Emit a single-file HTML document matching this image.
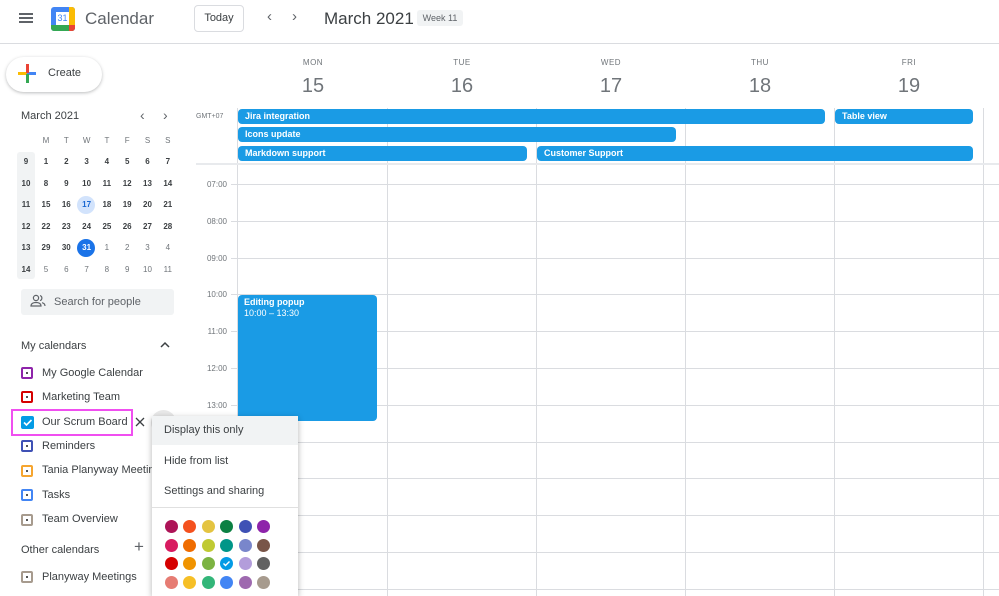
<!DOCTYPE html>
<html><head><meta charset="utf-8"><style>
*{box-sizing:border-box;margin:0;padding:0}
html,body{width:999px;height:596px;overflow:hidden}
body{background:#fff;font-family:"Liberation Sans",Arial,sans-serif;color:#3c4043;position:relative;line-height:1.2}
.a{position:absolute}
.ev{position:absolute;background:#1a9be5;border-radius:4px;color:#fff;font-size:9px;font-weight:bold;padding:2px 7px;height:15px;line-height:11px;white-space:nowrap}
.vl{position:absolute;width:1px;background:#dadce0}
.hl{position:absolute;height:1px;background:#dadce0;left:231px;width:768px}
.tl{position:absolute;left:197px;font-size:8px;color:#70757a;width:30px;text-align:right}
.dh{position:absolute;width:60px;text-align:center;font-size:8px;color:#70757a;letter-spacing:.5px}
.dn{position:absolute;width:60px;text-align:center;font-size:20px;color:#70757a}
.mc{position:absolute;font-size:8px;color:#3c4043;width:20px;text-align:center}
.cal{position:absolute;left:21px;width:12px;height:12px;border:2px solid;border-radius:2px}
.cal:after{content:"";position:absolute;left:3px;top:3px;width:2px;height:2px;background:#555}
.cl{position:absolute;left:42px;font-size:11px;color:#3c4043}
.dot{position:absolute;width:13px;height:13px;border-radius:50%}
</style></head><body>
<div class="a" style="left:19px;top:13px;width:14px;height:2px;background:#5f6368;box-shadow:0 4px 0 #5f6368,0 8px 0 #5f6368"></div>
<div class="a" style="left:51px;top:7px;width:24px;height:24px;border-radius:3px;background:#4285f4;overflow:hidden">
<div class="a" style="left:0;top:18px;width:24px;height:6px;background:#34a853"></div>
<div class="a" style="left:18px;top:0;width:6px;height:18px;background:#fbbc04"></div>
<div class="a" style="left:18px;top:18px;width:6px;height:6px;background:#ea4335"></div>
<div class="a" style="left:5px;top:5px;width:13px;height:13px;background:#fff;color:#4285f4;font-size:9px;text-align:center;line-height:13px">31</div></div>
<div class="a" style="left:85px;top:9px;font-size:17px;color:#5f6368">Calendar</div>
<div class="a" style="left:194px;top:5px;width:50px;height:27px;border:1px solid #dadce0;border-radius:4px;font-size:11px;text-align:center;line-height:25px;color:#3c4043">Today</div>
<div class="a" style="left:267px;top:8px;font-size:15px;color:#5f6368">‹</div>
<div class="a" style="left:292px;top:8px;font-size:15px;color:#5f6368">›</div>
<div class="a" style="left:324px;top:9px;font-size:17px;color:#3c4043">March 2021</div>
<div class="a" style="left:417px;top:10px;width:46px;height:16px;background:#f1f3f4;border-radius:3px;font-size:9px;text-align:center;line-height:16px;color:#5f6368">Week 11</div>
<div class="a" style="left:0;top:43px;width:999px;height:1px;background:#dadce0"></div>
<div class="a" style="left:6px;top:57px;width:96px;height:35px;border-radius:18px;box-shadow:0 1px 3px rgba(60,64,67,.35);background:#fff"></div>
<div class="a" style="left:18px;top:72px;width:9px;height:3px;background:#fbbc04"></div>
<div class="a" style="left:27px;top:72px;width:9px;height:3px;background:#4285f4"></div>
<div class="a" style="left:26px;top:64px;width:3px;height:9px;background:#ea4335"></div>
<div class="a" style="left:26px;top:74px;width:3px;height:9px;background:#34a853"></div>
<div class="a" style="left:48px;top:67px;font-size:11px;color:#3c4043">Create</div>
<div class="a" style="left:21px;top:110px;font-size:11px;color:#3c4043">March 2021</div>
<div class="a" style="left:140px;top:107px;font-size:14px;color:#5f6368">‹</div>
<div class="a" style="left:163px;top:107px;font-size:14px;color:#5f6368">›</div>
<div class="a" style="left:17px;top:152px;width:18px;height:127px;background:#f1f3f4;border-radius:3px"></div>
<div class="a" style="left:77px;top:196px;width:18px;height:18px;border-radius:50%;background:#d2e3fc"></div>
<div class="a" style="left:77px;top:239px;width:18px;height:18px;border-radius:50%;background:#1a73e8"></div>
<div id="mini"></div>
<div class="a" style="left:21px;top:289px;width:153px;height:26px;background:#f1f3f4;border-radius:3px"></div>
<svg class="a" style="left:30px;top:294px" width="16" height="14" viewBox="0 0 16 14" fill="none" stroke="#5f6368" stroke-width="1.2"><circle cx="6" cy="4" r="2.6"/><path d="M1 12c0-2.5 2.5-3.5 5-3.5s5 1 5 3.5z"/><path d="M10 1.6a2.6 2.6 0 0 1 0 5M12 8.7c1.6.4 3 1.3 3 3.3"/></svg>
<div class="a" style="left:54px;top:296px;font-size:11px;color:#5f6368">Search for people</div>
<div class="a" style="left:21px;top:340px;font-size:11px;color:#3c4043">My calendars</div>
<svg class="a" style="left:160px;top:341px" width="10" height="8"><path d="M1 6l4-4 4 4" stroke="#3c4043" stroke-width="1.5" fill="none"/></svg>
<div class="cal" style="top:367px;border-color:#8e24aa"></div><div class="cl" style="top:367px">My Google Calendar</div>
<div class="cal" style="top:391px;border-color:#d50000"></div><div class="cl" style="top:391px">Marketing Team</div>
<div class="a" style="left:21px;top:416px;width:13px;height:13px;background:#039be5;border-radius:2px"></div>
<svg class="a" style="left:22px;top:417px" width="11" height="11"><path d="M2 5.5l2.5 2.5 5-5" stroke="#fff" stroke-width="1.6" fill="none"/></svg>
<div class="cl" style="top:416px">Our Scrum Board</div>
<div class="a" style="left:11px;top:409px;width:122px;height:27px;border:2px solid #f04ff0"></div>
<svg class="a" style="left:135px;top:417px" width="10" height="10"><path d="M1 1l8 8M9 1l-8 8" stroke="#3c4043" stroke-width="1.3"/></svg>
<div class="cal" style="top:440px;border-color:#3f51b5"></div><div class="cl" style="top:440px">Reminders</div>
<div class="cal" style="top:465px;border-color:#f6a52f"></div><div class="cl" style="top:464px;width:112px;overflow:hidden;white-space:nowrap">Tania Planyway Meeting</div>
<div class="cal" style="top:489px;border-color:#4285f4"></div><div class="cl" style="top:489px">Tasks</div>
<div class="cal" style="top:514px;border-color:#a79b8e"></div><div class="cl" style="top:513px">Team Overview</div>
<div class="a" style="left:21px;top:544px;font-size:11px;color:#3c4043">Other calendars</div>
<div class="a" style="left:134px;top:537px;font-size:17px;color:#5f6368">+</div>
<div class="cal" style="top:571px;border-color:#a79b8e"></div><div class="cl" style="top:571px">Planyway Meetings</div>
<div class="dh" style="left:283px;top:58px">MON</div><div class="dn" style="left:283px;top:74px">15</div>
<div class="dh" style="left:432px;top:58px">TUE</div><div class="dn" style="left:432px;top:74px">16</div>
<div class="dh" style="left:581px;top:58px">WED</div><div class="dn" style="left:581px;top:74px">17</div>
<div class="dh" style="left:730px;top:58px">THU</div><div class="dn" style="left:730px;top:74px">18</div>
<div class="dh" style="left:879px;top:58px">FRI</div><div class="dn" style="left:879px;top:74px">19</div>
<div class="a" style="left:196px;top:113px;font-size:7px;color:#70757a">GMT+07</div>
<div class="vl" style="left:237px;top:108px;height:488px"></div>
<div class="vl" style="left:387px;top:108px;height:488px"></div>
<div class="vl" style="left:536px;top:108px;height:488px"></div>
<div class="vl" style="left:685px;top:108px;height:488px"></div>
<div class="vl" style="left:834px;top:108px;height:488px"></div>
<div class="vl" style="left:983px;top:108px;height:488px"></div>
<div class="a" style="left:196px;top:163px;width:803px;height:2px;background:#e8eaed"></div>
<div id="hrs"></div>
<div class="ev" style="left:238px;top:109px;width:587px">Jira integration</div>
<div class="ev" style="left:835px;top:109px;width:138px">Table view</div>
<div class="ev" style="left:238px;top:127px;width:438px">Icons update</div>
<div class="ev" style="left:238px;top:146px;width:289px">Markdown support</div>
<div class="ev" style="left:537px;top:146px;width:436px">Customer Support</div>
<div class="ev" style="left:238px;top:295px;width:139px;height:126px;line-height:11px;padding:2px 6px">Editing popup<br><span style="font-weight:normal">10:00 – 13:30</span></div>
<div class="a" style="left:151px;top:410px;width:25px;height:25px;border-radius:50%;background:#e8e8e8"></div>
<div class="a" style="left:152px;top:416px;width:146px;height:180px;background:#fff;box-shadow:0 2px 6px rgba(0,0,0,.3)"></div>
<div class="a" style="left:152px;top:416px;width:146px;height:29px;background:#f1f3f4"></div>
<div class="a" style="left:164px;top:424px;font-size:11px;color:#3c4043">Display this only</div>
<div class="a" style="left:164px;top:455px;font-size:11px;color:#3c4043">Hide from list</div>
<div class="a" style="left:164px;top:485px;font-size:11px;color:#3c4043">Settings and sharing</div>
<div class="a" style="left:152px;top:507px;width:146px;height:1px;background:#e0e0e0"></div>
<div id="dots"></div>
<svg class="a" style="left:221px;top:558px" width="11" height="11"><path d="M2.5 5.5l2 2 4-4" stroke="#fff" stroke-width="1.4" fill="none"/></svg>
<script>
var m=document.getElementById('mini'),h='';
var days=['M','T','W','T','F','S','S'];
for(var i=0;i<7;i++)h+='<div class="mc" style="left:'+(36+i*20.3)+'px;top:136px;color:#70757a">'+days[i]+'</div>';
var wk=[9,10,11,12,13,14];
for(var r=0;r<6;r++){var y=157+r*21.5;h+='<div class="mc" style="left:16px;top:'+y+'px;font-weight:bold">'+wk[r]+'</div>';
for(var c=0;c<7;c++){var d=r*7+c+1,col='#3c4043',txt=d,fw='bold';if(d>31){txt=d-31;col='#70757a';fw='normal'}
if(d==17)col='#1967d2';if(d==31)col='#fff';
h+='<div class="mc" style="left:'+(36+c*20.3)+'px;top:'+y+'px;color:'+col+';font-weight:'+fw+'">'+txt+'</div>';}}
m.innerHTML=h;
var hr=document.getElementById('hrs');h='';
for(var k=0;k<12;k++){var y=184+k*36.8;h+='<div class="hl" style="top:'+y+'px"></div>';
if(k<7)h+='<div class="tl" style="top:'+(y-4)+'px">'+('0'+(7+k)).slice(-2)+':00</div>';}
hr.innerHTML=h;
var cols=[['#ad1457','#f4511e','#e4c441','#0b8043','#3f51b5','#8e24aa'],['#d81b60','#ef6c00','#c0ca33','#009688','#7986cb','#795548'],['#d50000','#f09300','#7cb342','#039be5','#b39ddb','#616161'],['#e67c73','#f6bf26','#33b679','#4285f4','#9e69af','#a79b8e']];
var xs=[171,189,208,226,245,263],ys=[526,545,563,582];h='';
for(var r=0;r<4;r++)for(var c=0;c<6;c++)h+='<div class="dot" style="left:'+(xs[c]-6.5)+'px;top:'+(ys[r]-6.5)+'px;background:'+cols[r][c]+'"></div>';
document.getElementById('dots').innerHTML=h;
</script>
</body></html>
